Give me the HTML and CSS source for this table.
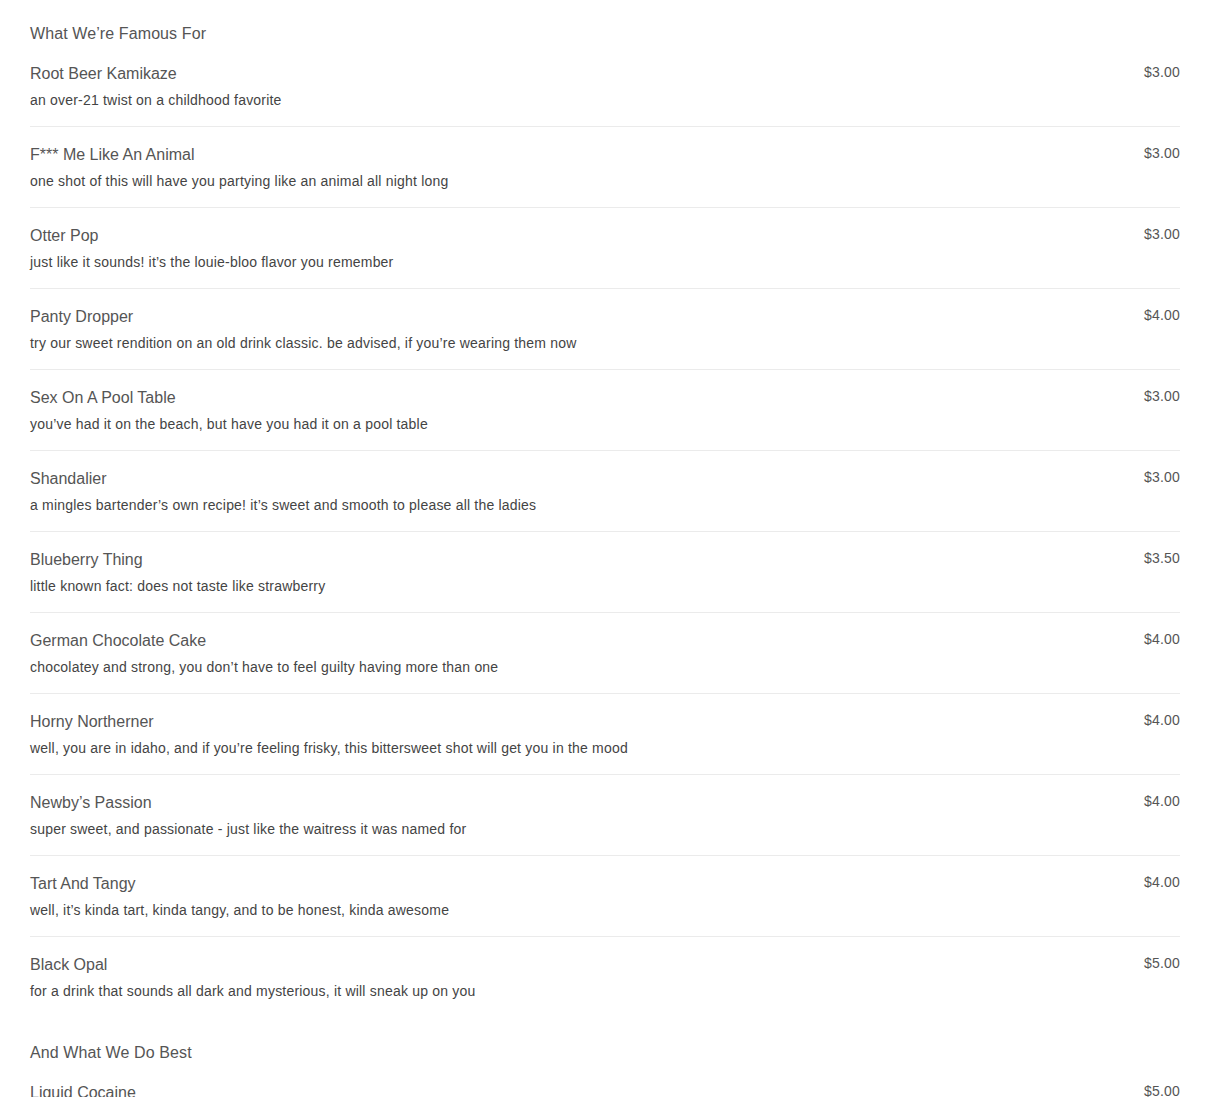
FILE: index.html
```html
<!DOCTYPE html>
<html lang="en">

<head>
  <meta charset="UTF-8" />
  <meta name="viewport" content="width=device-width, initial-scale=1.0" />
  <title>Menu</title>
  <link rel="stylesheet" href="styles.css">
</head>

<body>
  <main class="menu">
    <section class="menu-section">
      <h2>What We’re Famous For</h2>

      <div class="menu-item">
        <div class="item-text">
          <h3>Root Beer Kamikaze</h3>
          <p>an over-21 twist on a childhood favorite</p>
        </div>
        <span class="price">$3.00</span>
      </div>

      <div class="menu-item">
        <div class="item-text">
          <h3>F*** Me Like An Animal</h3>
          <p>one shot of this will have you partying like an animal all night long</p>
        </div>
        <span class="price">$3.00</span>
      </div>

      <div class="menu-item">
        <div class="item-text">
          <h3>Otter Pop</h3>
          <p>just like it sounds! it’s the louie-bloo flavor you remember</p>
        </div>
        <span class="price">$3.00</span>
      </div>

      <div class="menu-item">
        <div class="item-text">
          <h3>Panty Dropper</h3>
          <p>try our sweet rendition on an old drink classic. be advised, if you’re wearing them now</p>
        </div>
        <span class="price">$4.00</span>
      </div>

      <div class="menu-item">
        <div class="item-text">
          <h3>Sex On A Pool Table</h3>
          <p>you’ve had it on the beach, but have you had it on a pool table</p>
        </div>
        <span class="price">$3.00</span>
      </div>

      <div class="menu-item">
        <div class="item-text">
          <h3>Shandalier</h3>
          <p>a mingles bartender’s own recipe! it’s sweet and smooth to please all the ladies</p>
        </div>
        <span class="price">$3.00</span>
      </div>

      <div class="menu-item">
        <div class="item-text">
          <h3>Blueberry Thing</h3>
          <p>little known fact: does not taste like strawberry</p>
        </div>
        <span class="price">$3.50</span>
      </div>

      <div class="menu-item">
        <div class="item-text">
          <h3>German Chocolate Cake</h3>
          <p>chocolatey and strong, you don’t have to feel guilty having more than one</p>
        </div>
        <span class="price">$4.00</span>
      </div>

      <div class="menu-item">
        <div class="item-text">
          <h3>Horny Northerner</h3>
          <p>well, you are in idaho, and if you’re feeling frisky, this bittersweet shot will get you in the mood</p>
        </div>
        <span class="price">$4.00</span>
      </div>

      <div class="menu-item">
        <div class="item-text">
          <h3>Newby’s Passion</h3>
          <p>super sweet, and passionate - just like the waitress it was named for</p>
        </div>
        <span class="price">$4.00</span>
      </div>

      <div class="menu-item">
        <div class="item-text">
          <h3>Tart And Tangy</h3>
          <p>well, it’s kinda tart, kinda tangy, and to be honest, kinda awesome</p>
        </div>
        <span class="price">$4.00</span>
      </div>

      <div class="menu-item">
        <div class="item-text">
          <h3>Black Opal</h3>
          <p>for a drink that sounds all dark and mysterious, it will sneak up on you</p>
        </div>
        <span class="price">$5.00</span>
      </div>
    </section>

    <section class="menu-section">
      <h2>And What We Do Best</h2>

      <div class="menu-item">
        <div class="item-text">
          <h3>Liquid Cocaine</h3>
          <p>&nbsp;</p>
        </div>
        <span class="price">$5.00</span>
      </div>
    </section>
  </main>
</body>

</html>
```

FILE: styles.css
```css
body {
  margin: 0;
  font-family: 'Liberation Sans', Arial, sans-serif;
  background-color: #fff;
  color: #444;
}

.menu {
  padding: 22px 30px 40px;
}

.menu-section {
  margin-bottom: 24px;
}

.menu-section h2 {
  margin: 0 0 1px;
  padding-top: 1px;
  font-size: 16px;
  font-weight: normal;
  line-height: 22px;
  letter-spacing: 0.1px;
  color: #555;
}

.menu-item {
  display: flex;
  justify-content: space-between;
  align-items: flex-start;
  padding: 16px 0 15px;
  border-bottom: 1px solid #ebebeb;
}

.menu-item:last-child {
  border-bottom: none;
}

.item-text {
  padding-top: 1px;
}

.item-text h3 {
  margin: 0;
  font-size: 16px;
  font-weight: normal;
  line-height: 22px;
  color: #555;
}

.item-text p {
  margin: 4px 0 0;
  font-size: 14px;
  line-height: 22px;
  letter-spacing: 0.2px;
  color: #444;
}

.price {
  font-size: 14px;
  line-height: 20px;
  letter-spacing: 0.2px;
  color: #555;
}
```
